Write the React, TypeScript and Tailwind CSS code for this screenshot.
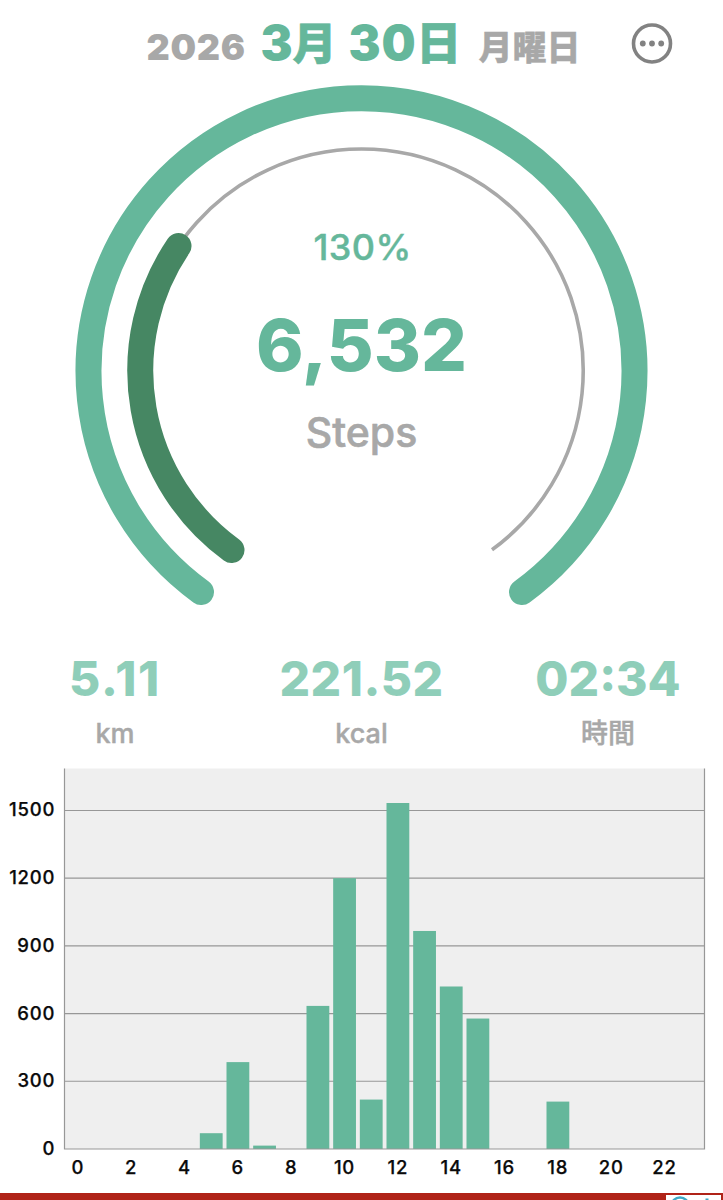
import { clsx } from "clsx";

const GREEN = "#65b79b";

const hourlySteps: Record<number, number> = {
    5: 70,
    6: 385,
    7: 15,
    9: 634,
    10: 1200,
    11: 219,
    12: 1533,
    13: 966,
    14: 720,
    15: 578,
    18: 210,
};

const stats = [
    { value: "5.11", unit: "km", tracking: "tracking-[1.7px]" },
    { value: "221.52", unit: "kcal", tracking: "tracking-[0.5px]" },
    { value: "02:34", unit: "時間", tracking: "tracking-normal" },
];

function Header() {
    return (
        <header className="flex h-[76px] items-start">
            <h1 className="flex w-[434px] ml-[146.5px] pt-[19px] items-baseline whitespace-nowrap leading-none">
                <span className="w-[114px] text-[36px] leading-none font-black tracking-[0.7px] text-[#a8a8a8]">2026</span>
                <span className="flex w-[218px] items-baseline text-[48px] leading-none font-black text-[#65b79b]">
                    <span>3</span>
                    <span className="text-[44px] [-webkit-text-stroke:0.7px]">月</span>
                    <span className="ml-3 tracking-[0.7px]">30</span>
                    <span className="text-[45px] [-webkit-text-stroke:0.7px]">日</span>
                </span>
                <span className="text-[34px] leading-none font-black text-[#a8a8a8] [-webkit-text-stroke:0.3px]">月曜日</span>
            </h1>
            <button className="ml-[50.5px] mt-[23px]" aria-label="Menu">
                <svg width="42" height="42" viewBox="0 0 42 42">
                    <circle cx="21" cy="20.5" r="18.5" fill="none" stroke="#828282" strokeWidth="3.6" />
                    <circle cx="11.8" cy="20.5" r="2.9" fill="#828282" />
                    <circle cx="21" cy="20.5" r="2.9" fill="#828282" />
                    <circle cx="30.2" cy="20.5" r="2.9" fill="#828282" />
                </svg>
            </button>
        </header>
    );
}

function Gauge() {
    return (
        <section className="relative h-[564px]">
            <svg className="block" width="723" height="564" viewBox="0 76 723 564" fill="none">
                <path d="M201 592 A273 273 0 1 1 522 592" stroke={GREEN} strokeWidth="26" strokeLinecap="round" />
                <path d="M231.5 550 A221.6 221.6 0 1 1 492 549.8" stroke="#a8a8a8" strokeWidth="3.6" />
                <path d="M231.5 550 A222 222 0 0 1 178.5 246" stroke="#468763" strokeWidth="26" strokeLinecap="round" />
            </svg>
            <div className="absolute inset-x-0 top-[147px] flex flex-col items-center">
                <div className="h-12 pl-0.5 text-[36px] leading-[48px] font-medium tracking-[0.4px] text-[#65b79b] [-webkit-text-stroke:0.4px]">130%</div>
                <div className="mt-[34px] h-20 text-[72px] leading-[80px] font-extrabold text-[#65b79b]">6,532</div>
                <div className="mt-[23px] h-12 text-[41px] leading-[48px] font-medium text-[#a8a8a8] [-webkit-text-stroke:0.6px]">Steps</div>
            </div>
        </section>
    );
}

function Stats() {
    return (
        <section className="grid h-32 grid-cols-[230px_263px_230px] pt-[15px]">
            {stats.map(({ value, unit, tracking }) => (
                <div key={unit} className="flex flex-col items-center">
                    <div className={clsx("h-12 text-[48px] leading-[48px] font-extrabold text-[#8fceb9]", tracking)}>{value}</div>
                    <div className="mt-[13px] h-9 text-[27px] leading-9 font-medium text-[#a8a8a8] [-webkit-text-stroke:0.4px]">{unit}</div>
                </div>
            ))}
        </section>
    );
}

function Chart() {
    const left = 64.5;
    const base = 381;
    const slot = 640 / 24;
    const y = (v: number) => base - v * 0.2257;

    return (
        <svg className="block" width="723" height="425" viewBox="0 0 723 425">
            <rect x={left} y="0.5" width="640" height="380.5" fill="#efefef" />
            {[300, 600, 900, 1200, 1500].map((v) => (
                <line key={v} x1={left} x2="704.5" y1={y(v)} y2={y(v)} stroke="#979797" strokeWidth="1.1" />
            ))}
            {Object.entries(hourlySteps).map(([hour, v]) => (
                <rect key={hour} x={left + Number(hour) * slot + 2} y={y(v)} width="22.8" height={base - y(v)} fill={GREEN} />
            ))}
            <path d="M64.5 0.5V381H704.5V0.5" fill="none" stroke="#979797" strokeWidth="1.2" />
            <g className="text-[18.5px] font-medium" fill="#0a0a0a" stroke="#0a0a0a" strokeWidth="0.25" letterSpacing="0.8">
                {[0, 300, 600, 900, 1200, 1500].map((v) => (
                    <text key={v} x="55.3" y={y(v) + 6} textAnchor="end">{v}</text>
                ))}
                {[0, 2, 4, 6, 8, 10, 12, 14, 16, 18, 20, 22].map((h) => (
                    <text key={h} x={left + (h + 0.5) * slot} y="406.3" textAnchor="middle">{h}</text>
                ))}
            </g>
        </svg>
    );
}

function AdBanner() {
    return (
        <div className="flex h-[7px] justify-end overflow-hidden bg-[#b02318] pt-0.5 pr-0.5">
            <svg width="55" height="5" viewBox="0 0 55 5">
                <rect width="55" height="5" fill="#fff" />
                <circle cx="14" cy="11" r="8.5" fill="none" stroke="#3fa9c6" strokeWidth="2.5" />
                <path d="M41 5V3.5" stroke="#3fa9c6" strokeWidth="3" />
            </svg>
        </div>
    );
}

export default function App() {
    return (
        <main className="h-[1200px] w-[723px] overflow-hidden bg-white font-['Inter','Noto_Sans_CJK_JP',sans-serif]">
            <Header />
            <Gauge />
            <Stats />
            <Chart />
            <AdBanner />
        </main>
    );
}
